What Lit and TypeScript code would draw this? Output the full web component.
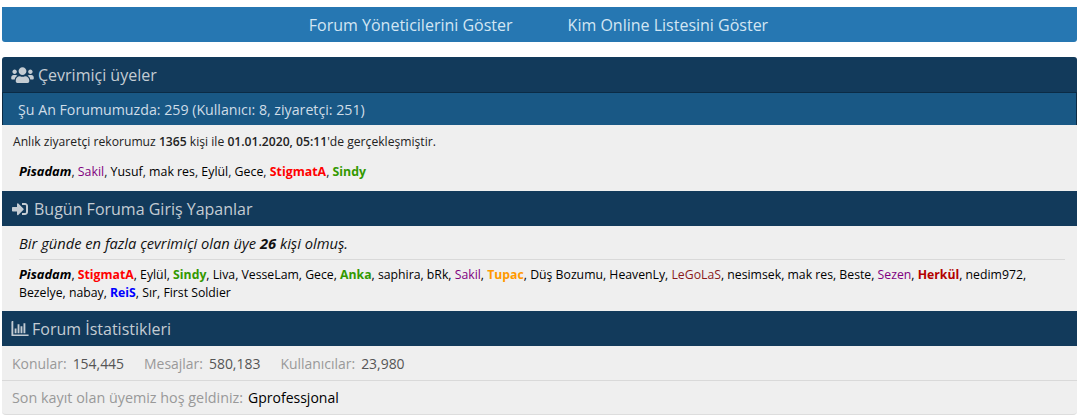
import { LitElement, html, css } from "lit";
import { customElement } from "lit/decorators.js";

type U = [string, string?];
const usersA: U[] = [["Pisadam","pis"],["Sakil","pur"],["Yusuf"],["mak res"],["Eylül"],["Gece"],["StigmatA","red"],["Sindy","grn"]];
const usersB: U[] = [["Pisadam","pis"],["StigmatA","red"],["Eylül"],["Sindy","grn"],["Liva"],["VesseLam"],["Gece"],["Anka","grn"],["saphira"],["bRk"],["Sakil","pur"],["Tupac","org"],["Düş Bozumu"],["HeavenLy"],["LeGoLaS","mar"],["nesimsek"],["mak res"],["Beste"],["Sezen","pur"],["Herkül","dred"],["nedim972"],["Bezelye"],["nabay"],["ReiS","blu"],["Sır"],["First Soldier"]];

@customElement("app-root")
export class AppRoot extends LitElement {
  static styles = css`
    :host { display: block; width: 1080px; height: 415px; overflow: hidden; background: #fff; font-family: "Open Sans", "Noto Sans", sans-serif; color: #000; }
    .wrap { padding: 7px 3px 0 2px; }
    .top { height: 35px; background: #2677b2; border-radius: 0 0 3px 3px; display: flex; justify-content: center; align-items: center; gap: 55px; color: #d3e6f3; font-size: 16px; margin-bottom: 15px; padding-right: 2px; }
    .panel { background: #efefef; border-radius: 3px 3px 4px 4px; overflow: hidden; border-bottom: 1px solid #ddd; }
    .hd { height: 35px; background: #123a5b; color: #c4ccd3; font-size: 16px; display: flex; align-items: center; padding-left: 9px; box-sizing: border-box; }
    .hd svg { fill: #c4ccd3; display: block; }
    .hd .i1 { margin-right: 4px; }
    .hd .i2 { margin-right: 5px; }
    .hd .i3 { margin-right: 3px; }
    .sub { height: 33px; background: #195885; border-top: 1px solid #0b2b45; border-left: 1px solid #0b2b45; border-right: 1px solid #0b2b45; color: #d0dde8; font-size: 14.2px; display: flex; align-items: center; padding-left: 15px; box-sizing: border-box; }
    .body { box-sizing: border-box; padding: 0 12px 0 17px; border-left: 1px solid #d8d8d8; margin-left: -1px; }
    .b1 { height: 66px; font-size: 12.15px; color: #222; }
    .rec { margin-left: -6px; padding-top: 8px; line-height: 17px; }
    .rec b { font-weight: 600; }
    .on { padding-top: 13px; line-height: 17px; font-size: 12.35px; }
    .b2 { height: 85px; font-size: 12.25px; }
    .it { font-size: 14.7px; font-style: italic; height: 33px; line-height: 34px; border-bottom: 1px solid #d9d9d9; color: #111; box-sizing: content-box; }
    .it b { font-weight: 700; }
    .list { padding-top: 6px; line-height: 18px; }
    .u { color: #000; }
    .pis { font-weight: 700; font-style: italic; color: #000; font-size: 12.9px; line-height: 1; }
    .pur { color: #800080; }
    .red { font-weight: 700; color: #f00; }
    .grn { font-weight: 700; color: #339900; }
    .org { font-weight: 700; color: #ff9900; }
    .mar { color: #8b1a1a; }
    .dred { font-weight: 700; color: #b30000; }
    .blu { font-weight: 700; color: #0000ff; }
    .stat { height: 34px; display: flex; align-items: center; padding-left: 10px; font-size: 13.95px; color: #999; border-bottom: 1px solid #d9d9d9; box-sizing: content-box; }
    .stat span { color: #555; margin-left: 6px; margin-right: 20px; }
    .stat.last { border-bottom: none; height: 33px; font-size: 14.35px; }
    .stat .nm { color: #000; margin: 0 0 0 5px; font-size: 14px; }
  `;

  private names(list: U[]) {
    return list.map(([n, c], i) => html`<span class=${c ?? "u"}>${n}</span>${i < list.length - 1 ? ", " : ""}`);
  }

  render() {
    return html`<div class="wrap">
      <div class="top"><span>Forum Yöneticilerini Göster</span><span>Kim Online Listesini Göster</span></div>
      <div class="panel">
        <div class="hd">
          <svg class="i1" width="23" height="18" viewBox="0 0 640 512"><path d="M96 224c35 0 64-29 64-64s-29-64-64-64-64 29-64 64 29 64 64 64zm448 0c35 0 64-29 64-64s-29-64-64-64-64 29-64 64 29 64 64 64zm32 32h-64c-18 0-34 7-45 19 40 22 69 62 75 109h66c18 0 32-14 32-32v-32c0-35-29-64-64-64zm-256 0c62 0 112-50 112-112S382 32 320 32 208 82 208 144s50 112 112 112zm77 32h-8c-21 10-44 16-69 16s-48-6-69-16h-8c-64 0-115 52-115 115v29c0 26 21 48 48 48h288c26 0 48-22 48-48v-29c0-64-52-115-115-115zm-224-13c-12-12-28-19-45-19H64c-35 0-64 29-64 64v32c0 18 14 32 32 32h66c6-47 35-87 75-109z"/></svg>
          <span>Çevrimiçi üyeler</span>
        </div>
        <div class="sub">Şu An Forumumuzda: 259 (Kullanıcı: 8, ziyaretçi: 251)</div>
        <div class="body b1">
          <div class="rec">Anlık ziyaretçi rekorumuz <b>1365</b> kişi ile <b>01.01.2020, 05:11</b>'de gerçekleşmiştir.</div>
          <div class="on">${this.names(usersA)}</div>
        </div>
        <div class="hd">
          <svg class="i2" width="18" height="16" viewBox="0 0 512 512"><path d="M416 448h-84c-7 0-12-5-12-12v-40c0-7 5-12 12-12h84c18 0 32-14 32-32V160c0-18-14-32-32-32h-84c-7 0-12-5-12-12V76c0-7 5-12 12-12h84c53 0 96 43 96 96v192c0 53-43 96-96 96zm-47-201L201 79c-15-15-41-4-41 17v96H24c-13 0-24 11-24 24v96c0 13 11 24 24 24h136v96c0 21 26 32 41 17l168-168c9-10 9-24 0-34z"/></svg>
          <span>Bugün Foruma Giriş Yapanlar</span>
        </div>
        <div class="body b2">
          <div class="it">Bir günde en fazla çevrimiçi olan üye <b>26</b> kişi olmuş.</div>
          <div class="list">${this.names(usersB)}</div>
        </div>
        <div class="hd">
          <svg class="i3" width="18" height="15" viewBox="0 0 512 448"><path d="M32 0h24v400h456v48H16c-9 0-16-7-16-16V32C0 14 14 0 32 0zm64 224h56v144H96zm88-128h56v272h-56zm88 64h56v208h-56zm88-96h56v304h-56z"/></svg>
          <span>Forum İstatistikleri</span>
        </div>
        <div class="stat">Konular: <span>154,445</span>Mesajlar: <span>580,183</span>Kullanıcılar: <span>23,980</span></div>
        <div class="stat last">Son kayıt olan üyemiz hoş geldiniz: <span class="nm">Gprofessjonal</span></div>
      </div>
    </div>`;
  }
}
